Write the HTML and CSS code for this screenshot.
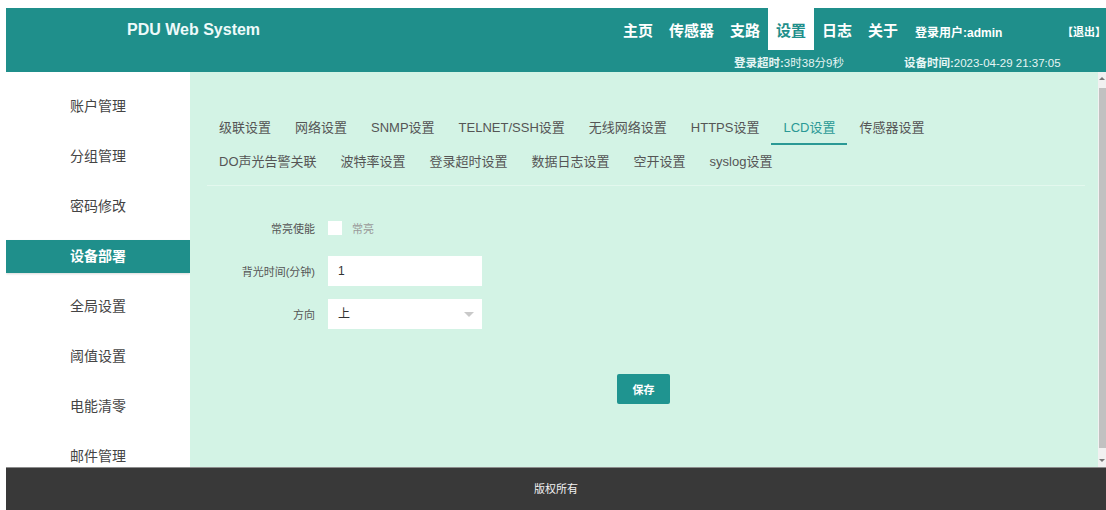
FILE: index.html
```html
<!DOCTYPE html>
<html lang="zh-CN">
<head>
<meta charset="utf-8">
<title>PDU Web System</title>
<link rel="stylesheet" href="styles.css">
</head>
<body>
<header class="topbar">
  <div class="brand">PDU Web System</div>
  <div class="top-right">
    <div class="top-row">
      <nav class="nav">
        <a class="nav-item">主页</a>
        <a class="nav-item">传感器</a>
        <a class="nav-item">支路</a>
        <a class="nav-item active">设置</a>
        <a class="nav-item">日志</a>
        <a class="nav-item">关于</a>
      </nav>
      <span class="user"><b>登录用户:admin</b></span>
      <span class="logout">【退出】</span>
    </div>
    <div class="status-row">
      <span><b>登录超时:</b>3时38分9秒</span>
      <span><b>设备时间:</b>2023-04-29 21:37:05</span>
    </div>
  </div>
</header>

<div class="main">
  <aside class="sidebar">
    <a class="side-item">账户管理</a>
    <a class="side-item">分组管理</a>
    <a class="side-item">密码修改</a>
    <a class="side-item active">设备部署</a>
    <a class="side-item">全局设置</a>
    <a class="side-item">阈值设置</a>
    <a class="side-item">电能清零</a>
    <a class="side-item">邮件管理</a>
  </aside>

  <section class="content">
    <ul class="tabs">
      <li>级联设置</li>
      <li>网络设置</li>
      <li>SNMP设置</li>
      <li>TELNET/SSH设置</li>
      <li>无线网络设置</li>
      <li>HTTPS设置</li>
      <li class="active">LCD设置</li>
      <li>传感器设置</li>
      <li class="break"></li>
      <li>DO声光告警关联</li>
      <li>波特率设置</li>
      <li>登录超时设置</li>
      <li>数据日志设置</li>
      <li>空开设置</li>
      <li>syslog设置</li>
    </ul>

    <form class="form">
      <div class="form-row">
        <label class="form-label">常亮使能</label>
        <div class="check">
          <span class="check-box"></span>
          <span class="check-text">常亮</span>
        </div>
      </div>
      <div class="form-row">
        <label class="form-label">背光时间(分钟)</label>
        <div class="input">1</div>
      </div>
      <div class="form-row">
        <label class="form-label">方向</label>
        <div class="input select">上<span class="caret"></span></div>
      </div>
      <div class="actions">
        <button type="button" class="btn">保存</button>
      </div>
    </form>
  </section>

  <div class="scrollbar">
    <span class="sb-arrow up"></span>
    <span class="sb-thumb"></span>
    <span class="sb-arrow down"></span>
  </div>
</div>

<footer class="footer">版权所有</footer>
</body>
</html>
```

FILE: styles.css
```css
* { box-sizing: border-box; }

html, body { height: 100%; }

body {
  margin: 8px 0 0 6px;
  font-family: "Liberation Sans", "Noto Sans CJK SC", sans-serif;
  color: #333;
  background: #fff;
  overflow: hidden;
}

a { text-decoration: none; color: inherit; }

/* ---------- top bar ---------- */
.topbar {
  display: flex;
  height: 64px;
  background: #1f8f8b;
  color: #fff;
}

.brand {
  flex: 1;
  padding: 7px 0 0 121px;
  font-size: 16px;
  font-weight: bold;
  line-height: 30px;
  color: #eefafa;
}

.top-right {
  width: 491px;
  display: flex;
  flex-direction: column;
}

.top-row {
  display: flex;
  align-items: center;
  height: 42px;
}

.nav { display: flex; height: 100%; }

.nav-item {
  padding: 4px 8px 0;
  font-size: 15px;
  font-weight: bold;
  line-height: 38px;
  color: #fff;
}

.nav-item.active {
  background: #fff;
  color: #1f8f8b;
}

.user {
  margin-left: 9px;
  font-size: 12px;
  padding-top: 4px;
}

.logout {
  margin-left: auto;
  font-size: 11px;
  font-weight: bold;
  padding-top: 4px;
}

.status-row {
  display: flex;
  gap: 60px;
  height: 22px;
  padding: 3px 0 0 119px;
  font-size: 11.5px;
  line-height: 20px;
  color: #e6f5f4;
}

/* ---------- main area ---------- */
.main {
  display: flex;
  height: 395px;
}

.sidebar {
  width: 184px;
  flex: none;
  padding-top: 18px;
  background: #fff;
  overflow: hidden;
  display: flex;
  flex-direction: column;
  gap: 17px;
}

.side-item {
  flex: none;
  height: 33px;
  line-height: 33px;
  text-align: center;
  font-size: 14px;
  color: #444;
}

.side-item.active {
  background: #1f8f8b;
  color: #fff;
  font-weight: bold;
  box-shadow: 0 1px 2px rgba(0, 0, 0, 0.15);
}

.content {
  flex: 1;
  background: #d3f3e5;
  padding: 39px 13px 0 17px;
}

.tabs {
  list-style: none;
  margin: 0;
  padding: 0 0 6px;
  display: flex;
  flex-wrap: wrap;
  border-bottom: 1px solid #e3f8ee;
}

.tabs li {
  height: 34px;
  line-height: 34px;
  padding: 0 12px;
  font-size: 13px;
  color: #555;
}

.tabs li.break {
  flex-basis: 100%;
  height: 0;
  padding: 0;
}

.tabs li.active {
  color: #2a9995;
  border-bottom: 2px solid #2a9995;
}

/* ---------- form ---------- */
.form { margin: 27px 0 0; }

.form-row {
  display: flex;
  align-items: center;
  height: 30px;
  margin-bottom: 13px;
}

.form-label {
  width: 108px;
  margin-right: 13px;
  text-align: right;
  font-size: 11px;
  color: #555;
}

.check { display: flex; align-items: center; gap: 10px; }

.check-box {
  width: 14px;
  height: 14px;
  background: #fff;
}

.check-text { font-size: 11px; color: #999; }

.input {
  width: 154px;
  height: 30px;
  line-height: 30px;
  padding: 0 10px;
  background: #fff;
  font-size: 12px;
  color: #333;
}

.select {
  display: flex;
  justify-content: space-between;
  align-items: center;
}

.caret {
  width: 0;
  height: 0;
  border-left: 5px solid transparent;
  border-right: 5px solid transparent;
  border-top: 5px solid #c9c9c9;
  margin-right: -2px;
}

.actions {
  display: flex;
  justify-content: center;
  margin: 45px 0 0 -17px;
  padding-left: 12px;
}

.btn {
  width: 53px;
  height: 30px;
  border: none;
  border-radius: 2px;
  background: #1f9490;
  color: #fff;
  font-family: inherit;
  font-size: 11px;
  font-weight: bold;
}

/* ---------- scrollbar ---------- */
.scrollbar {
  width: 8px;
  flex: none;
  background: #f1f1f1;
  display: flex;
  flex-direction: column;
  align-items: center;
}

.sb-arrow {
  height: 13px;
  flex: none;
  display: flex;
  align-items: center;
}

.sb-arrow::before {
  content: "";
  border-left: 3px solid transparent;
  border-right: 3px solid transparent;
}

.sb-arrow.up::before { border-bottom: 3px solid #777; }
.sb-arrow.down::before { border-top: 3px solid #777; }

.sb-thumb {
  flex: 1;
  width: 7px;
  margin: 3px 0 6px;
  background: #c1c1c1;
}

/* ---------- footer ---------- */
.footer {
  height: 43px;
  background: #393939;
  border-top: 1px solid #8c8c8c;
  color: #f2f2f2;
  font-size: 11px;
  line-height: 42px;
  text-align: center;
}
```
